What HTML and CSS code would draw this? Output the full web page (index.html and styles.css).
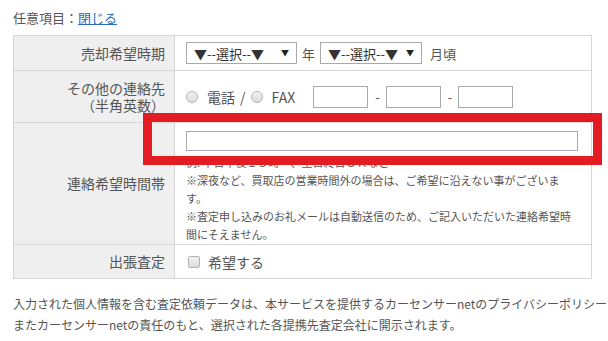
FILE: index.html
```html
<html>
  <head>
    <meta charset="utf-8">
    <link rel="stylesheet" href="styles.css">
  </head>
  <body>
    <div class="page">
      <p class="optional">任意項目：<a href="#">閉じる</a></p>

      <div class="form-wrap">
        <table class="form-table">
          <tr class="row-period">
            <th>売却希望時期</th>
            <td>
              <div class="field-line">
                <span class="select-box wide">
                  <select><option>▼--選択--▼</option></select>
                </span>
                <span class="unit">年</span>
                <span class="select-box">
                  <select><option>▼--選択--▼</option></select>
                </span>
                <span class="unit last">月頃</span>
              </div>
            </td>
          </tr>
          <tr class="row-contact">
            <th>その他の連絡先<br>（半角英数）</th>
            <td>
              <div class="field-line">
                <label class="radio-label"><input type="radio" name="contact"><span>電話</span></label>
                <span class="slash">/</span>
                <label class="radio-label"><input type="radio" name="contact"><span>FAX</span></label>
                <input type="text" class="tel-field first">
                <span class="dash">-</span>
                <input type="text" class="tel-field">
                <span class="dash">-</span>
                <input type="text" class="tel-field">
              </div>
            </td>
          </tr>
          <tr class="row-time">
            <th>連絡希望時間帯</th>
            <td>
              <input type="text" class="long-field">
              <div class="notes">
                <p>例: 平日午後１５時～、土日終日ＯＫなど</p>
                <p>※深夜など、買取店の営業時間外の場合は、ご希望に沿えない事がございます。</p>
                <p>※査定申し込みのお礼メールは自動送信のため、ご記入いただいた連絡希望時間にそえません。</p>
              </div>
            </td>
          </tr>
          <tr class="row-visit">
            <th>出張査定</th>
            <td>
              <label class="check-label"><input type="checkbox"><span>希望する</span></label>
            </td>
          </tr>
        </table>
        <div class="highlight"></div>
      </div>

      <p class="privacy">入力された個人情報を含む査定依頼データは、本サービスを提供するカーセンサーnetのプライバシーポリシーに基づき、<br>またカーセンサーnetの責任のもと、選択された各提携先査定会社に開示されます。</p>
    </div>
  </body>
</html>
```

FILE: styles.css
```css
html, body {
  margin: 0;
  padding: 0;
  background: #fff;
  overflow: hidden;
}
.page {
  padding: 8px 0 0 13px;
  font-family: "Noto Sans CJK JP", sans-serif;
  color: #555;
}
.optional {
  margin: 0;
  font-size: 13px;
  line-height: 20px;
}
.optional a {
  color: #2a6ac0;
  text-decoration: underline;
}
.form-wrap {
  position: relative;
  margin-top: 7px;
  width: 579px;
}
.form-table {
  width: 579px;
  border-collapse: collapse;
  table-layout: fixed;
}
.form-table th {
  width: 151px;
  background: #efefef;
  color: #555;
  font-weight: normal;
  font-size: 14px;
  line-height: 17px;
  text-align: right;
  padding: 0 9px 0 0;
  border: 1px solid #d6d6d6;
}
.form-table td {
  padding: 0 0 0 11px;
  border: 1px solid #d6d6d6;
  font-size: 13px;
  color: #555;
}
.row-period { height: 35px; }
.row-contact { height: 52px; }
.row-time { height: 122px; }
.row-visit { height: 34px; }

.field-line {
  display: flex;
  align-items: center;
}
.select-box {
  position: relative;
  display: inline-block;
}
.select-box select {
  -webkit-appearance: none;
  appearance: none;
  width: 102px;
  height: 22px;
  box-sizing: border-box;
  border: 1px solid #a9a9a9;
  background: #fff;
  padding: 0 0 0 7px;
  font: 13px "Noto Sans CJK JP", sans-serif;
  color: #333;
  border-radius: 0;
}
.select-box.wide select {
  width: 111px;
}
.select-box::after {
  content: "▼";
  position: absolute;
  right: 8px;
  top: 6px;
  font-size: 8px;
  line-height: 10px;
  color: #222;
  pointer-events: none;
}
.unit {
  margin: 0 5px 0 5px;
}
.unit.last {
  margin-left: 8px;
}
.radio-label,
.check-label {
  display: inline-flex;
  align-items: center;
  font-size: 14px;
}
.radio-label input,
.check-label input {
  -webkit-appearance: none;
  appearance: none;
  margin: 0;
  width: 12px;
  height: 12px;
  box-sizing: border-box;
  border: 1px solid #b4b4b4;
  background: linear-gradient(#f2f2f2, #dcdcdc);
}
.radio-label input {
  border-radius: 50%;
}
.check-label input {
  border-radius: 2px;
  margin-left: 2px;
}
.radio-label span {
  margin-left: 9px;
}
.check-label span {
  margin-left: 8px;
}
.slash {
  margin: 0 5px 0 5px;
  font-size: 14px;
}
.tel-field {
  width: 55px;
  height: 22px;
  box-sizing: border-box;
  border: 1px solid #aaa;
  margin: 0;
  padding: 0 4px;
}
.tel-field.first {
  margin-left: 18px;
}
.dash {
  margin: 0 6px 0 7px;
}
.row-time td {
  vertical-align: top;
  padding: 8px 0 0 11px;
}
.long-field {
  display: block;
  width: 392px;
  height: 20px;
  box-sizing: border-box;
  border: 1px solid #aaa;
  margin: 0;
}
.notes {
  width: 390px;
  margin-top: 2px;
  font-size: 11px;
  line-height: 18px;
}
.notes p {
  margin: 0;
}
.highlight {
  position: absolute;
  left: 130px;
  top: 78px;
  width: 459px;
  height: 52px;
  box-sizing: border-box;
  border: 9px solid #e31b23;
}
.privacy {
  margin: 14px 0 0 0;
  font-size: 12px;
  line-height: 21px;
  white-space: nowrap;
}
```
